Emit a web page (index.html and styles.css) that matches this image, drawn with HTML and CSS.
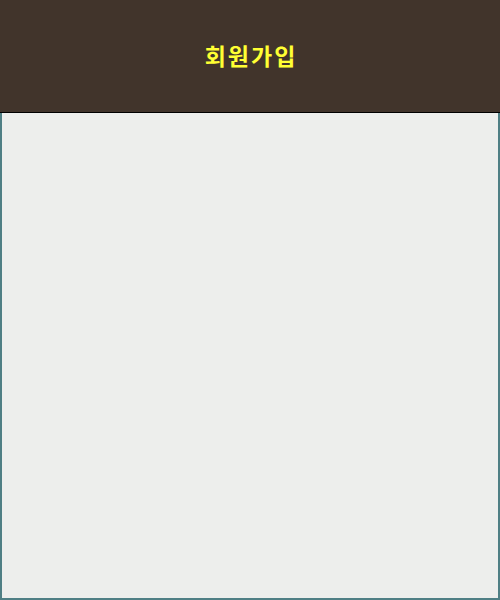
FILE: index.html
```html
<!DOCTYPE html>
<html lang="ko">
<head>
<meta charset="utf-8">
<link rel="stylesheet" href="styles.css">
</head>
<body>
<div class="app">
  <header class="topbar"><h1 class="title">회원가입</h1></header>
  <main class="content"></main>
</div>
</body>
</html>
```
FILE: styles.css
```css
html, body { margin: 0; padding: 0; }
body { font-family: "Noto Sans CJK KR", "Noto Sans", sans-serif; }
.app { width: 500px; height: 600px; display: flex; flex-direction: column; box-sizing: border-box; }
.topbar { height: 112px; background: #41342b; border-bottom: 1px solid #000; display: flex; align-items: center; justify-content: center; flex: none; }
.title { margin: 0 0 2px 2px; color: #ffff33; font-size: 23px; font-weight: 700; line-height: 1; letter-spacing: 2px; }
.content { flex: 1; background: #edeeec; border: 2px solid #4f7f84; border-top: none; }
```
